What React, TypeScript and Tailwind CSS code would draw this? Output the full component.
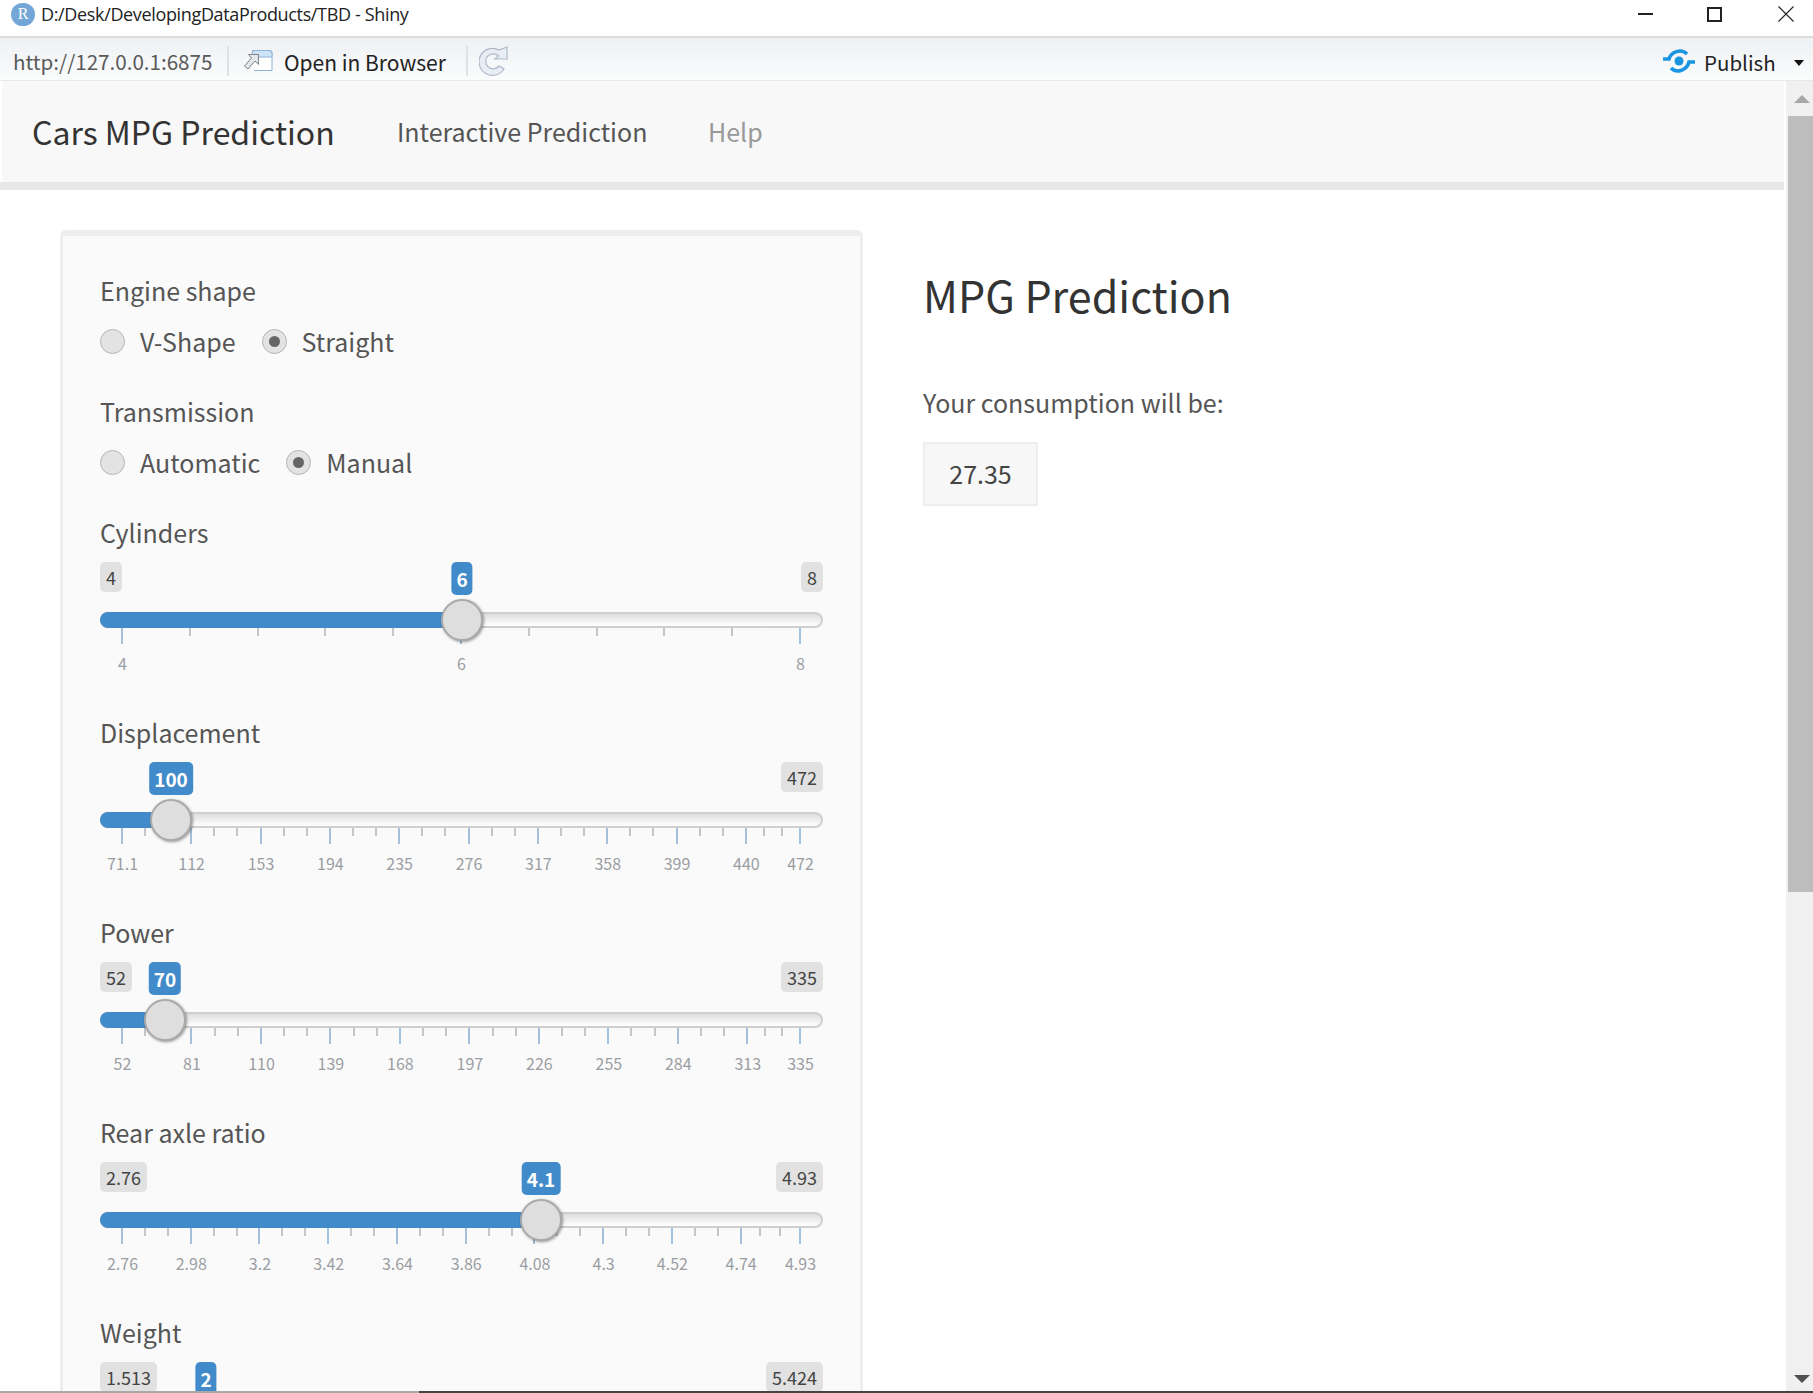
import React from "react";

const sans = "font-['Noto_Sans_CJK_SC','Source_Sans_Pro',sans-serif]";

type SliderProps = {
  label: string;
  min?: string;
  max: string;
  value: string;
  thumb: number; // thumb centre, px from track start
  majors?: { text: string; at: number }[];
  minorPerGap?: number;
};

const TICK_START = 22;
const TICK_SPAN = 678;

function makeMajors(texts: string[]) {
  const values = texts.map(Number);
  const lo = values[0];
  const hi = values[values.length - 1];
  return values.map((v, i) => ({ text: texts[i], at: (v - lo) / (hi - lo) }));
}

function Ticks({ majors, minorPerGap }: { majors: { text: string; at: number }[]; minorPerGap: number }) {
  const minors: number[] = [];
  majors.slice(0, -1).forEach((m, i) => {
    const next = majors[i + 1].at;
    for (let k = 1; k < minorPerGap; k++) {
      minors.push(m.at + ((next - m.at) * k) / minorPerGap);
    }
  });
  return (
    <>
      {minors.map((at) => (
        <span
          key={at}
          className="absolute top-[16px] h-[8px] w-[2px] bg-[#c4c6ca]"
          style={{ left: TICK_START + at * TICK_SPAN - 1 }}
        />
      ))}
      {majors.map((m) => (
        <React.Fragment key={m.text}>
          <span
            className="absolute top-[16px] h-[16px] w-[2px] bg-[#a3bfda]"
            style={{ left: TICK_START + m.at * TICK_SPAN - 1 }}
          />
          <span
            className="absolute top-[41px] w-[60px] -translate-x-1/2 text-center text-[16px] leading-[20px] text-[#9a9ea3]"
            style={{ left: TICK_START + m.at * TICK_SPAN + 0.5 }}
          >
            {m.text}
          </span>
        </React.Fragment>
      ))}
    </>
  );
}

function Slider({ label, min, max, value, thumb, majors = [], minorPerGap = 3 }: SliderProps) {
  return (
    <div className="h-[200px]">
      <div className="h-[38px] text-[25px] leading-[38px] text-[#555]">{label}</div>
      <div className="relative mt-[11px] h-[151px] w-[723px]">
        <div className="flex items-start justify-between">
          {min ? (
            <span className="rounded-[5px] bg-[#e1e1e1] px-[6px] text-[18px] leading-[30px] text-[#444]">{min}</span>
          ) : (
            <span />
          )}
          <span className="rounded-[5px] bg-[#e1e1e1] px-[6px] text-[18px] leading-[30px] text-[#444]">{max}</span>
        </div>
        <span
          className="absolute top-0 -translate-x-1/2 rounded-[5px] bg-[#428bca] px-[5px] text-[19px] font-bold leading-[33px] text-white"
          style={{ left: thumb }}
        >
          {value}
        </span>
        <div className="absolute inset-x-0 top-[50px] h-[16px]">
          <div className="h-full rounded-full border-2 border-[#cfcfcf] bg-gradient-to-b from-[#dedede] to-white" />
          <div className="absolute inset-y-0 left-0 rounded-l-full bg-[#428bca]" style={{ width: thumb }} />
          <Ticks majors={majors} minorPerGap={minorPerGap} />
          <span
            className="absolute top-[-13px] h-[42px] w-[42px] -translate-x-1/2 rounded-full border-2 border-[#aaa] bg-[#dedede] shadow-[1px_1px_3px_rgba(0,0,0,0.4)]"
            style={{ left: thumb }}
          />
        </div>
      </div>
    </div>
  );
}

function Radio({ text, checked = false }: { text: string; checked?: boolean }) {
  return (
    <div className="flex items-center gap-[15px]">
      <span className="flex h-[25px] w-[25px] items-center justify-center rounded-full border border-[#b5b5b5] bg-[#e3e3e3]">
        {checked ? <span className="h-[11px] w-[11px] rounded-full bg-[#666]" /> : null}
      </span>
      <span className="text-[25px] leading-[38px] text-[#555]">{text}</span>
    </div>
  );
}

function RadioGroup({ label, children }: { label: string; children: React.ReactNode }) {
  return (
    <div className="h-[121px]">
      <div className="h-[38px] text-[25px] leading-[38px] text-[#555]">{label}</div>
      <div className="mt-[13px] flex gap-[26px]">{children}</div>
    </div>
  );
}

export default function App() {
  return (
    <div className={`flex h-[1393px] w-[1813px] flex-col overflow-hidden bg-white ${sans}`}>
      {/* window title */}
      <div className="flex h-[36px] shrink-0 items-center pb-[8px] font-['Open_Sans',sans-serif] text-[18px] text-[#222]">
        <span className="ml-[11px] flex h-[23px] w-[24px] items-center justify-center rounded-full bg-[#74a7d8] font-['Liberation_Serif',serif] text-[16px] text-white">
          R
        </span>
        <span className="ml-[6px] whitespace-nowrap text-[18px] tracking-[-0.35px]">
          D:/Desk/DevelopingDataProducts/TBD - Shiny
        </span>
        <div className="ml-auto flex items-center">
          <span className="h-[2px] w-[15px] bg-[#222]" />
          <span className="ml-[54px] h-[15px] w-[15px] border-2 border-[#222]" />
          <svg viewBox="0 0 16 16" className="ml-[56px] mr-[19px] h-[16px] w-[16px]" fill="none" stroke="#222" strokeWidth="1.1">
            <path d="M0.5 0.5 L15.5 15.5 M15.5 0.5 L0.5 15.5" />
          </svg>
        </div>
      </div>
      <div className="h-[2px] shrink-0 bg-[#dcdcdc]" />
      {/* viewer toolbar */}
      <div className="flex h-[42px] shrink-0 items-center bg-gradient-to-b from-[#eef1f4] to-[#fbfcfc] pt-[4px]">
        <span className="ml-[13px] w-[198px] whitespace-nowrap text-[20.6px] leading-[38px] text-[#5a5a5a]">
          http://127.0.0.1:6875
        </span>
        <span className="ml-[16px] h-[30px] w-[2px] bg-[#dfe2e5]" />
        <svg viewBox="0 0 30 24" className="ml-[14px] h-[24px] w-[30px]" fill="none">
          <path d="M9 1.5 H27 Q29 1.5 29 3.5 V21.5 H11" fill="#fff" stroke="#8eb2d6" />
          <path d="M12 1.5 H26 Q29 1.5 29 4.5 V8 H9 V4.5 Q9 1.5 12 1.5 Z" fill="#cfe3f7" stroke="#8eb2d6" />
          <path d="M5.5 5.5 H15.5 V15.5 L12 12 L5 20 L1.5 17 L8.5 9 Z" fill="#e4e6e9" stroke="#7f858c" />
        </svg>
        <span className="ml-[11px] mt-[2px] w-[161px] whitespace-nowrap text-[21px] leading-[38px] text-[#222]">
          Open in Browser
        </span>
        <span className="ml-[21px] h-[30px] w-[2px] bg-[#dfe2e5]" />
        <svg viewBox="0 0 30 30" className="ml-[11px] h-[30px] w-[30px]" fill="none">
          <path
            d="M25 23 A13.5 13.5 0 1 1 20 4 L28 1 V13 H16 L19.5 10 A7.5 7.5 0 1 0 20 20 Z"
            fill="#e9eef5"
            stroke="#aeb9c8"
            strokeWidth="1.2"
          />
        </svg>
        <div className="ml-auto flex items-center">
          <svg viewBox="0 0 32 24" className="h-[24px] w-[32px]" fill="none">
            <circle cx="16" cy="12" r="4.5" fill="#1a95e0" />
            <path d="M0 10 H6 C8 3 18 -1 24 5" stroke="#1a95e0" strokeWidth="3.6" />
            <path d="M32 13 H26 C24 21 14 25 8 19" stroke="#1a95e0" strokeWidth="3.6" />
          </svg>
          <span className="ml-[9px] mt-[2px] w-[69px] whitespace-nowrap text-[20.5px] leading-[38px] text-[#222]">Publish</span>
          <span className="ml-[21px] mr-[9px] mt-[4px] h-0 w-0 border-x-[5px] border-t-[6px] border-x-transparent border-t-[#111]" />
        </div>
      </div>
      <div className="h-px shrink-0 bg-[#e8e8e8]" />

      <div className="flex min-h-0 flex-1">
        <div className="min-w-0 flex-1 overflow-hidden">
          {/* navbar */}
          <div className="mx-[2px] flex h-[101px] items-center bg-[#f8f8f8]">
            <span className="ml-[30px] mb-[2px] w-[303px] whitespace-nowrap text-[32px] text-[#333]">Cars MPG Prediction</span>
            <span className="ml-[62px] w-[250px] whitespace-nowrap text-[25px] text-[#555]">Interactive Prediction</span>
            <span className="ml-[61px] text-[25px] text-[#999]">Help</span>
          </div>
          <div className="mr-[2px] h-[8px] bg-[#e7e7e7]" />

          <div className="flex items-start pl-[60px] pt-[40px]">
            {/* sidebar */}
            <div className="w-[803px] shrink-0 rounded-[6px] border-x-[3px] border-t-[6px] border-[#eeeeee] bg-[#fafafa] pl-[37px] pr-[37px] pt-[35px]">
              <RadioGroup label="Engine shape">
                <Radio text="V-Shape" />
                <Radio text="Straight" checked />
              </RadioGroup>
              <RadioGroup label="Transmission">
                <Radio text="Automatic" />
                <Radio text="Manual" checked />
              </RadioGroup>
              <Slider
                label="Cylinders"
                min="4"
                max="8"
                value="6"
                thumb={362}
                minorPerGap={5}
                majors={makeMajors(["4", "6", "8"])}
              />
              <Slider
                label="Displacement"
                max="472"
                value="100"
                thumb={71}
                majors={makeMajors(["71.1", "112", "153", "194", "235", "276", "317", "358", "399", "440", "472"])}
              />
              <Slider
                label="Power"
                min="52"
                max="335"
                value="70"
                thumb={65}
                majors={makeMajors(["52", "81", "110", "139", "168", "197", "226", "255", "284", "313", "335"])}
              />
              <Slider
                label="Rear axle ratio"
                min="2.76"
                max="4.93"
                value="4.1"
                thumb={441}
                majors={makeMajors(["2.76", "2.98", "3.2", "3.42", "3.64", "3.86", "4.08", "4.3", "4.52", "4.74", "4.93"])}
              />
              <Slider label="Weight" min="1.513" max="5.424" value="2" thumb={106} />
            </div>

            {/* main panel */}
            <div className="ml-[60px]">
              <div className="mt-[34px] text-[43px] leading-[60px] text-[#333]">MPG Prediction</div>
              <div className="mt-[59px] text-[25px] leading-[38px] text-[#555]">Your consumption will be:</div>
              <div className="mt-[21px] flex h-[64px] w-[115px] items-center justify-center border-2 border-[#eeeeee] bg-[#f7f7f7] text-[25px] text-[#444]">
                27.35
              </div>
            </div>
          </div>
        </div>

        {/* scrollbar */}
        <div className="flex w-[27px] shrink-0 flex-col bg-[#f0f0f0] pl-[2px]">
          <div className="flex h-[35px] items-center justify-center pl-[2px]">
            <span className="h-0 w-0 border-x-[8px] border-b-[8px] border-x-transparent border-b-[#a8a8a8]" />
          </div>
          <div className="h-[776px] bg-[#bdbdbd]" />
          <div className="mt-auto flex h-[24px] items-center justify-center pl-[2px]">
            <span className="h-0 w-0 border-x-[8px] border-t-[8px] border-x-transparent border-t-[#505050]" />
          </div>
        </div>
      </div>

      <div className="flex h-[2px] shrink-0">
        <div className="w-[419px] bg-[#a9a9a9]" />
        <div className="flex-1 bg-[#444]" />
      </div>
    </div>
  );
}
